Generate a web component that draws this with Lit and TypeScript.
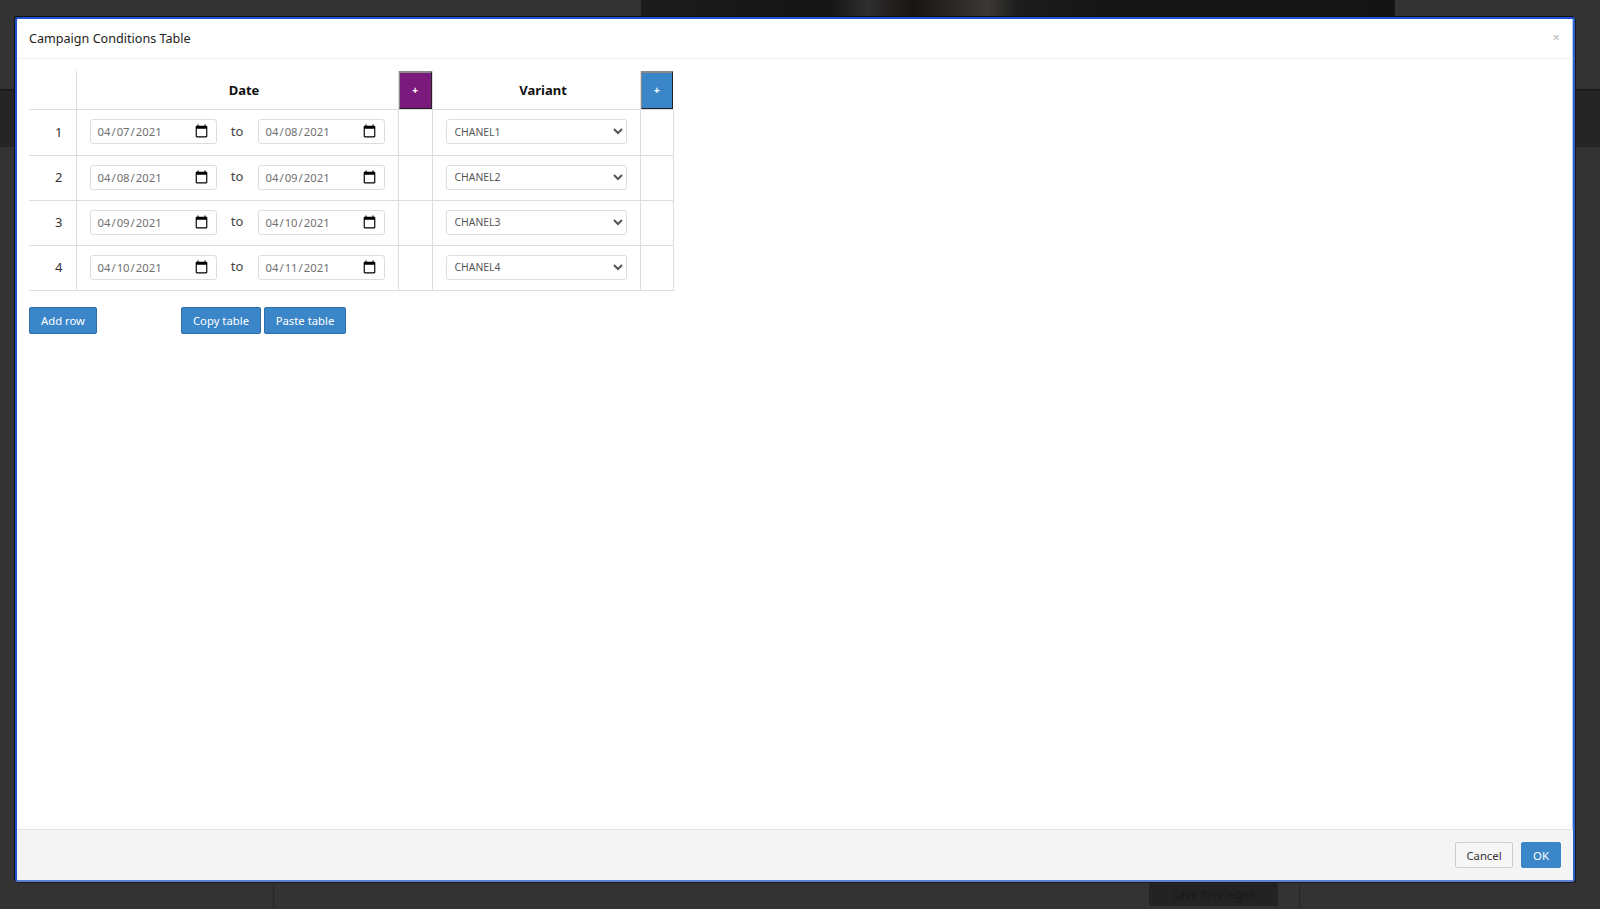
import { LitElement, html, css } from "lit";
import { customElement } from "lit/decorators.js";

const rows = [
  ["2021-04-07", "2021-04-08", "CHANEL1"],
  ["2021-04-08", "2021-04-09", "CHANEL2"],
  ["2021-04-09", "2021-04-10", "CHANEL3"],
  ["2021-04-10", "2021-04-11", "CHANEL4"],
];

@customElement("app-root")
export class AppRoot extends LitElement {
  static styles = css`
    :host { display: block; width: 1600px; height: 909px; overflow: hidden; font-family: "Noto Sans", "Open Sans", sans-serif; }
    .page { position: relative; width: 1600px; height: 909px; background: #333; overflow: hidden; }
    .hero { position: absolute; left: 641px; top: 0; width: 754px; height: 17px; background: linear-gradient(90deg,#1c1c1c,#141414 25%,#2e2e2e 30%,#1a1512 36%,#3a3834 46%,#1c1c1c 50%,#161616 60%,#141414); }
    .band { position: absolute; left: 0; right: 0; top: 89px; height: 58px; background: #252525; border-top: 2px solid #1c1c1c; box-sizing: border-box; }
    .panel { position: absolute; left: 273px; top: 800px; width: 1027px; height: 120px; border: 1px solid #262626; box-sizing: border-box; }
    .save { position: absolute; left: 1149px; top: 883px; width: 129px; height: 23px; background: #232323; border-radius: 2px; color: #191919; font-size: 12px; display: flex; align-items: center; justify-content: center; }
    .modal { position: absolute; left: 15px; top: 17px; width: 1560px; height: 865px; box-sizing: border-box; background: #fff; border: 2px solid #1f52d4; border-right-color: #2a63cc; border-bottom-color: #5d80d2; border-radius: 3px; box-shadow: inset -1px -1px 0 #b7c9ee, -1px -1px 0 #111, 1px 1px 0 #1a1a1a; display: flex; flex-direction: column; overflow: hidden; }
    .head { height: 39px; flex: none; border-bottom: 1px solid #f0f0f0; display: flex; align-items: center; justify-content: space-between; padding: 0 13px 0 12px; color: #222; font-size: 12.6px; }
    .close { color: #c8c8c8; font-size: 13px; font-weight: 700; margin-top: -4px; }
    .body { flex: 1; padding: 12px 12px 0; }
    table { border-collapse: collapse; table-layout: fixed; width: 644px; font-size: 13px; color: #333; }
    col.n { width: 47px; } col.d { width: 322px; } col.p { width: 34px; } col.v { width: 208px; } col.q { width: 33px; }
    th, td { padding: 0; border: 1px solid #ddd; text-align: center; box-sizing: border-box; }
    tr:first-child th { border-top: 0; height: 38px; font-weight: 700; color: #111; padding-left: 14px; }
    th:first-child, td:first-child { border-left: 0; }
    td { height: 45px; padding-bottom: 2px; }
    tr:nth-child(2) td { height: 46px; }
    td:first-child { padding-left: 13px; }
    tr:first-child th.btn { padding: 0; border: 0; }
    .plus { display: block; width: 100%; height: 38px; border-style: solid; border-color: #8a8a8a #222 #222 #8a8a8a; border-width: 2px 1px 1.5px 1.5px; box-sizing: border-box; color: #fff; font: 700 10px "Noto Sans", sans-serif; padding: 0 0 2px; }
    .purple { background: #7a1a7c; }
    .blue { background: #3a86c8; }
    .range { display: flex; align-items: center; padding: 0 13px; }
    .to { width: 41px; text-align: center; color: #444; margin-top: -2px; }
    .date { width: 127px; height: 25px; box-sizing: border-box; border: 1px solid #ddd; border-radius: 3px; padding: 0 0 0 6px; font: 11.3px "Noto Sans", sans-serif; color: #707070; background: #fff; }
    .date::-webkit-calendar-picker-indicator { width: 15px; height: 15px; padding: 0; margin: 0 7px 0 0; }
    select { width: 181px; height: 25px; display: block; margin: 0 0 0 13px; box-sizing: border-box; border: 1px solid #ddd; border-radius: 3px; background: #fff; padding: 0 2px 0 4px; font: 10.4px "Noto Sans", sans-serif; color: #555; }
    .actions { display: flex; margin-top: 16px; }
    .b { height: 26px; box-sizing: border-box; border-radius: 2px; border: 1px solid #2a6fa8; background: #3a86c8; color: #fff; font: 11.3px "Noto Sans", sans-serif; padding: 0; }
    .actions .b { height: 27px; }
    .add { width: 68px; margin-right: 84px; }
    .copy { width: 80px; margin-right: 3px; }
    .paste { width: 82px; }
    .foot { height: 51px; flex: none; background: #f4f4f4; border-top: 1px solid #e4e4e4; box-sizing: border-box; display: flex; justify-content: flex-end; align-items: center; gap: 8px; padding: 0 12px 0 0; }
    .cancel { width: 58px; background: #f6f6f6; border-color: #ccc; color: #333; }
    .ok { width: 40px; border-color: #3a86c8; }
  `;

  render() {
    return html`<div class="page">
      <div class="hero"></div>
      <div class="band"></div>
      <div class="panel"></div>
      <div class="save">Save Privileges</div>
      <div class="modal">
        <div class="head"><span>Campaign Conditions Table</span><span class="close">×</span></div>
        <div class="body">
          <table>
            <colgroup><col class="n" /><col class="d" /><col class="p" /><col class="v" /><col class="q" /></colgroup>
            <tr>
              <th></th><th>Date</th>
              <th class="btn"><button class="plus purple">+</button></th>
              <th>Variant</th>
              <th class="btn"><button class="plus blue">+</button></th>
            </tr>
            ${rows.map((r, i) => html`<tr>
              <td>${i + 1}</td>
              <td><div class="range">
                <input class="date" type="date" .value=${r[0]} />
                <span class="to">to</span>
                <input class="date" type="date" .value=${r[1]} />
              </div></td>
              <td></td>
              <td><select><option>${r[2]}</option></select></td>
              <td></td>
            </tr>`)}
          </table>
          <div class="actions">
            <button class="b add">Add row</button>
            <button class="b copy">Copy table</button>
            <button class="b paste">Paste table</button>
          </div>
        </div>
        <div class="foot"><button class="b cancel">Cancel</button><button class="b ok">OK</button></div>
      </div>
    </div>`;
  }
}
